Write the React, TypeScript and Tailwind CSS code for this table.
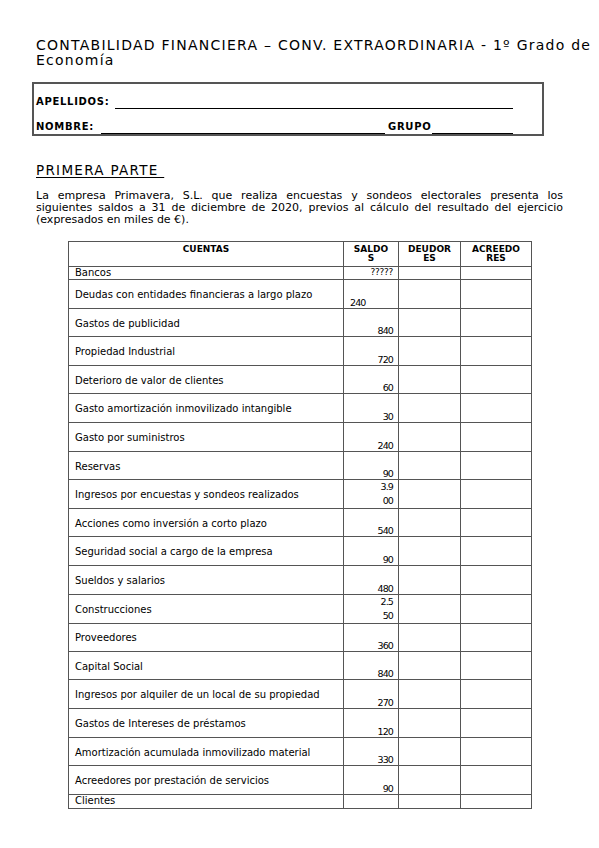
import React from "react";

type Row = { name: string; val: string[]; left?: boolean };

const rows: Row[] = [
  { name: "Deudas con entidades financieras a largo plazo", val: ["240"], left: true },
  { name: "Gastos de publicidad", val: ["840"] },
  { name: "Propiedad Industrial", val: ["720"] },
  { name: "Deterioro de valor de clientes", val: ["60"] },
  { name: "Gasto amortización inmovilizado intangible", val: ["30"] },
  { name: "Gasto por suministros", val: ["240"] },
  { name: "Reservas", val: ["90"] },
  { name: "Ingresos por encuestas y sondeos realizados", val: ["3.9", "00"] },
  { name: "Acciones como inversión a corto plazo", val: ["540"] },
  { name: "Seguridad social a cargo de la empresa", val: ["90"] },
  { name: "Sueldos y salarios", val: ["480"] },
  { name: "Construcciones", val: ["2.5", "50"] },
  { name: "Proveedores", val: ["360"] },
  { name: "Capital Social", val: ["840"] },
  { name: "Ingresos por alquiler de un local de su propiedad", val: ["270"] },
  { name: "Gastos de Intereses de préstamos", val: ["120"] },
  { name: "Amortización acumulada inmovilizado material", val: ["330"] },
  { name: "Acreedores por prestación de servicios", val: ["90"] },
];

const cols = "grid grid-cols-[275px_55px_62px_71px]";
const cell = "border-r border-b border-[#555]";

export default function App() {
  return (
    <div className="w-[599px] h-[848px] bg-white text-black font-['DejaVu_Sans',sans-serif] overflow-hidden">
      {/* Title */}
      <div className="pt-[38px] pl-[36px] text-[14px] leading-[15px] tracking-[1.25px] whitespace-nowrap">
        <div>CONTABILIDAD FINANCIERA – CONV. EXTRAORDINARIA - 1º Grado de</div>
        <div>Economía</div>
      </div>

      {/* Name box */}
      <div className="mt-[14px] ml-[32px] w-[512px] h-[54px] border-2 border-[#555] pl-[2px] pt-[12px] flex flex-col text-[10px] font-bold leading-[12px] tracking-[0.7px]">
        <div className="flex h-[13px]">
          <span className="w-[79px] whitespace-nowrap">APELLIDOS:</span>
          <div className="w-[398px] border-b border-black" />
        </div>
        <div className="flex h-[13px] mt-[12px]">
          <span className="w-[65px] whitespace-nowrap">NOMBRE:</span>
          <div className="w-[284px] border-b border-black" />
          <span className="w-[47px] pl-[3px] whitespace-nowrap">GRUPO</span>
          <div className="w-[81px] border-b border-black" />
        </div>
      </div>

      {/* Heading */}
      <div className="mt-[27px] pl-[36px] text-[13.5px] leading-[15px] tracking-[1.3px] whitespace-nowrap">
        <span className="underline underline-offset-[2px]">PRIMERA PARTE&nbsp;</span>
      </div>

      {/* Paragraph */}
      <div className="mt-[12px] ml-[36px] w-[527px] text-[11px] leading-[12px]">
        <div className="text-justify [text-align-last:justify] whitespace-nowrap">
          La empresa Primavera, S.L. que realiza encuestas y sondeos electorales presenta los
        </div>
        <div className="text-justify [text-align-last:justify] whitespace-nowrap">
          siguientes saldos a 31 de diciembre de 2020, previos al cálculo del resultado del ejercicio
        </div>
        <div>(expresados en miles de €).</div>
      </div>

      {/* Table */}
      <div className="mt-[15px] ml-[68px] w-[464px] border-l border-t border-[#555]">
        <div className={`${cols} h-[25px] text-[9px] font-bold leading-[9px] text-center`}>
          <div className={`${cell} pt-[3px]`}>CUENTAS</div>
          <div className={`${cell} pt-[3px]`}>SALDO<br />S</div>
          <div className={`${cell} pt-[3px]`}>DEUDOR<br />ES</div>
          <div className={`${cell} pt-[3px]`}>ACREEDO<br />RES</div>
        </div>
        <div className={`${cols} h-[13px]`}>
          <div className={`${cell} pl-[6px] text-[10px] leading-[12px]`}>Bancos</div>
          <div className={`${cell} flex flex-col justify-end items-end pr-[5px] pb-[2px] text-[9px] leading-[10px] tracking-[-0.3px]`}>?????</div>
          <div className={cell} />
          <div className={cell} />
        </div>
        {rows.map((r) => (
          <div key={r.name} className={`${cols} h-[28.6px]`}>
            <div className={`${cell} pl-[6px] pt-[9px] text-[10px] leading-[12px] whitespace-nowrap`}>{r.name}</div>
            <div
              className={`${cell} flex flex-col justify-end ${r.left ? "items-start pl-[6px]" : "items-end pr-[5px]"} text-[9.5px] ${r.val.length > 1 ? "leading-[14px]" : "leading-[10px]"} tracking-[-0.9px]`}
            >
              {r.val.map((v) => (
                <span key={v}>{v}</span>
              ))}
            </div>
            <div className={cell} />
            <div className={cell} />
          </div>
        ))}
        <div className={`${cols} h-[14.5px]`}>
          <div className={`${cell} pl-[6px] text-[10px] leading-[12px]`}>Clientes</div>
          <div className={cell} />
          <div className={cell} />
          <div className={cell} />
        </div>
      </div>
    </div>
  );
}
